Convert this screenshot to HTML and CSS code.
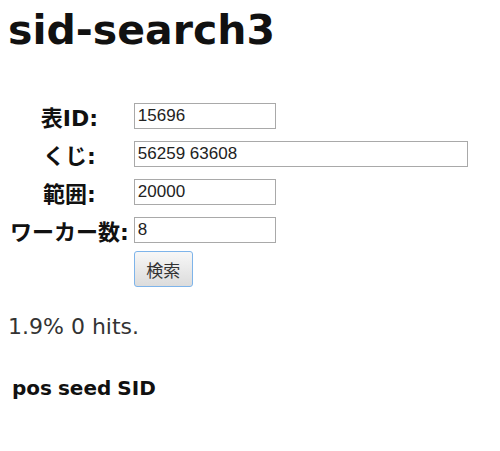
FILE: index.html
```html
<!DOCTYPE html>
<html lang="ja">
<head>
    <meta charset="UTF-8">
    <title>sid-search3</title>
    <link rel="stylesheet" href="styles.css">
</head>
<body>
    <h1>sid-search3</h1>
    <form class="search-form">
        <table class="form-table">
            <tr>
                <th><label for="tid">表ID:</label></th>
                <td><input type="text" id="tid" class="short" value="15696"></td>
            </tr>
            <tr>
                <th><label for="lottery">くじ:</label></th>
                <td><input type="text" id="lottery" class="long" value="56259 63608"></td>
            </tr>
            <tr>
                <th><label for="range">範囲:</label></th>
                <td><input type="text" id="range" class="short" value="20000"></td>
            </tr>
            <tr>
                <th><label for="workers">ワーカー数:</label></th>
                <td><input type="text" id="workers" class="short" value="8"></td>
            </tr>
            <tr class="btn-row">
                <th></th>
                <td><button type="button" class="search-btn">検索</button></td>
            </tr>
        </table>
    </form>
    <p class="status">1.9% 0 hits.</p>
    <table class="results">
        <tr>
            <th>pos</th>
            <th>seed</th>
            <th>SID</th>
        </tr>
    </table>
</body>
</html>
```

FILE: styles.css
```css
body {
    margin: 8px;
    font-family: "DejaVu Sans", "Noto Sans CJK JP", sans-serif;
    font-size: 20px;
    color: #222;
}

h1 {
    margin: -2px 0 0 0;
    font-size: 41px;
    font-weight: bold;
    line-height: 48px;
    color: #111;
}

.search-form {
    margin-top: 43px;
}

.form-table {
    border-spacing: 0;
}

.form-table th {
    font-size: 22px;
    font-weight: bold;
    text-align: center;
    padding: 0 5px 0 2px;
    height: 38px;
    color: #111;
    white-space: nowrap;
}

.form-table td {
    padding: 0;
}

.btn-row th,
.btn-row td {
    height: auto;
    vertical-align: top;
}

input {
    font-family: "Liberation Sans", Arial, sans-serif;
    font-size: 17px;
    height: 26px;
    box-sizing: border-box;
    border: 1px solid #a9a9a9;
    padding: 1px 3px;
    color: #222;
    display: block;
}

.short {
    width: 142px;
}

.long {
    width: 334px;
}

.search-btn {
    font-family: "Noto Sans CJK JP", sans-serif;
    font-size: 17px;
    height: 36px;
    width: 59px;
    padding: 0;
    background: linear-gradient(#f7f7f7, #dcdcdc);
    border: 1px solid #7eb4ea;
    border-radius: 3px;
    color: #333;
    margin: 2px 0 0 0;
}

.status {
    font-size: 22px;
    margin: 27px 0 0 0;
    color: #333;
}

.results {
    margin-top: 34px;
    border-spacing: 2px;
}

.results th {
    font-size: 20px;
    padding: 1px 2px;
    color: #111;
}
```
